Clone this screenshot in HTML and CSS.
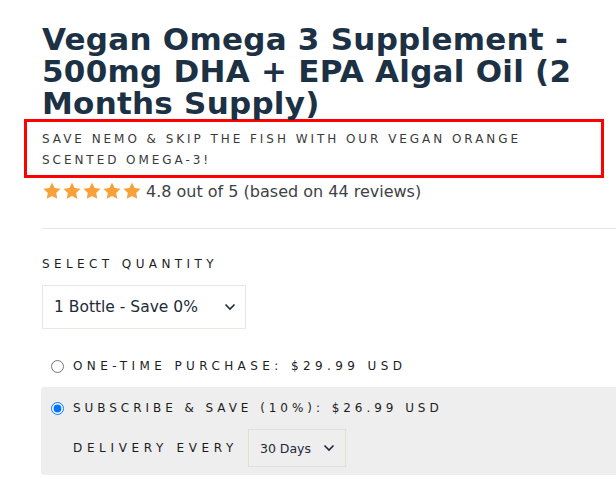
FILE: index.html
```html
<!DOCTYPE html>
<html>
<head>
<meta charset="utf-8">
<link rel="stylesheet" href="styles.css">
</head>
<body>
<div class="product">
  <div class="head">
    <h1 class="title">Vegan Omega 3 Supplement - 500mg DHA + EPA Algal Oil (2 Months Supply)</h1>
    <div class="tagline-box">
      <p class="tagline">Save Nemo &amp; skip the fish with our vegan orange scented Omega-3!</p>
    </div>
    <div class="rating">
      <span class="stars">
        <svg viewBox="0 0 24 24" class="star"><path d="M12 1.8l3.1 6.6 7.2.9-5.3 5 1.4 7.1L12 17.9l-6.4 3.5L7 14.3l-5.3-5 7.2-.9z"/></svg>
        <svg viewBox="0 0 24 24" class="star"><path d="M12 1.8l3.1 6.6 7.2.9-5.3 5 1.4 7.1L12 17.9l-6.4 3.5L7 14.3l-5.3-5 7.2-.9z"/></svg>
        <svg viewBox="0 0 24 24" class="star"><path d="M12 1.8l3.1 6.6 7.2.9-5.3 5 1.4 7.1L12 17.9l-6.4 3.5L7 14.3l-5.3-5 7.2-.9z"/></svg>
        <svg viewBox="0 0 24 24" class="star"><path d="M12 1.8l3.1 6.6 7.2.9-5.3 5 1.4 7.1L12 17.9l-6.4 3.5L7 14.3l-5.3-5 7.2-.9z"/></svg>
        <svg viewBox="0 0 24 24" class="star"><path d="M12 1.8l3.1 6.6 7.2.9-5.3 5 1.4 7.1L12 17.9l-6.4 3.5L7 14.3l-5.3-5 7.2-.9z"/></svg>
      </span>
      <span class="rating-text">4.8 out of 5 (based on 44 reviews)</span>
    </div>
  </div>
  <hr class="divider">
  <div class="label">Select Quantity</div>
  <div class="select qty">
    <span>1 Bottle - Save 0%</span>
    <svg class="chev" viewBox="0 0 12 8"><path d="M1.5 1.5l4.5 4.5 4.5-4.5" fill="none" stroke="#1c2b39" stroke-width="1.6"/></svg>
  </div>
  <label class="option one-time">
    <input type="radio" name="p">
    <span class="opt-text wide">One-time purchase: $29.99 USD</span>
  </label>
  <div class="sub-box">
    <label class="option">
      <input type="radio" name="p" checked>
      <span class="opt-text narrow">Subscribe &amp; save (10%): $26.99 USD</span>
    </label>
    <div class="delivery">
      <span class="opt-text wider">Delivery every</span>
      <div class="select days">
        <span>30 Days</span>
        <svg class="chev" viewBox="0 0 12 8"><path d="M1.5 1.5l4.5 4.5 4.5-4.5" fill="none" stroke="#1c2b39" stroke-width="1.6"/></svg>
      </div>
    </div>
  </div>
</div>
</body>
</html>
```
FILE: styles.css
```css
html, body { margin: 0; padding: 0; overflow: hidden; background: #fff; }
body { font-family: "DejaVu Sans", sans-serif; color: #1c1d1d; width: 616px; height: 479px; }
.product { padding: 23px 0 0 42px; width: 620px; }
.head { width: 544px; }
.title { margin: 0; font-size: 31px; line-height: 32px; font-weight: bold; color: #1c3144; letter-spacing: 0.25px; }
.tagline-box { margin: 0 0 0 -18px; border: 3px solid #ff0000; padding: 7px 15px 4px; width: 544px; }
.tagline { margin: 0; text-transform: uppercase; font-size: 12px; letter-spacing: 2.95px; line-height: 21px; color: #3a3a3a; }
.rating { display: flex; align-items: center; gap: 4px; margin-top: 2px; height: 22px; }
.stars { display: flex; }
.star { width: 20px; height: 20px; fill: #f9a139; }
.rating-text { font-size: 16px; color: #3d4246; }
.divider { border: 0; border-top: 1px solid #e8e8e1; margin: 26px 0 0; width: 600px; }
.label { margin-top: 28px; text-transform: uppercase; font-size: 12px; letter-spacing: 4.4px; color: #1c1d1d; }
.select { display: flex; align-items: center; justify-content: space-between; border: 1px solid #e8e8e1; box-sizing: border-box; color: #1c2b39; }
.qty { margin-top: 14px; width: 204px; height: 44px; padding: 0 9px 0 11px; font-size: 15.5px; }
.chev { width: 12px; height: 8px; }
.option { display: flex; align-items: center; gap: 3px; margin-left: 8px; }
.option input { margin: 0 6px 0 1px; width: 13px; height: 13px; }
.opt-text { text-transform: uppercase; font-size: 12px; letter-spacing: 4.2px; color: #1c1d1d; }
.opt-text.wide { letter-spacing: 4.4px; }
.opt-text.narrow { letter-spacing: 3.95px; }
.opt-text.wider { letter-spacing: 4.65px; }
.one-time { margin-top: 30px; }
.sub-box { margin: 14px 0 0 -1px; background: #eeeeee; border-radius: 3px; padding: 14px 0 8px 1px; width: 600px; }
.delivery { display: flex; align-items: center; gap: 10px; margin: 14px 0 0 31px; }
.days { width: 98px; height: 38px; padding: 0 10px 0 11px; font-size: 12.5px; border-color: #e0e0d6; }
```
